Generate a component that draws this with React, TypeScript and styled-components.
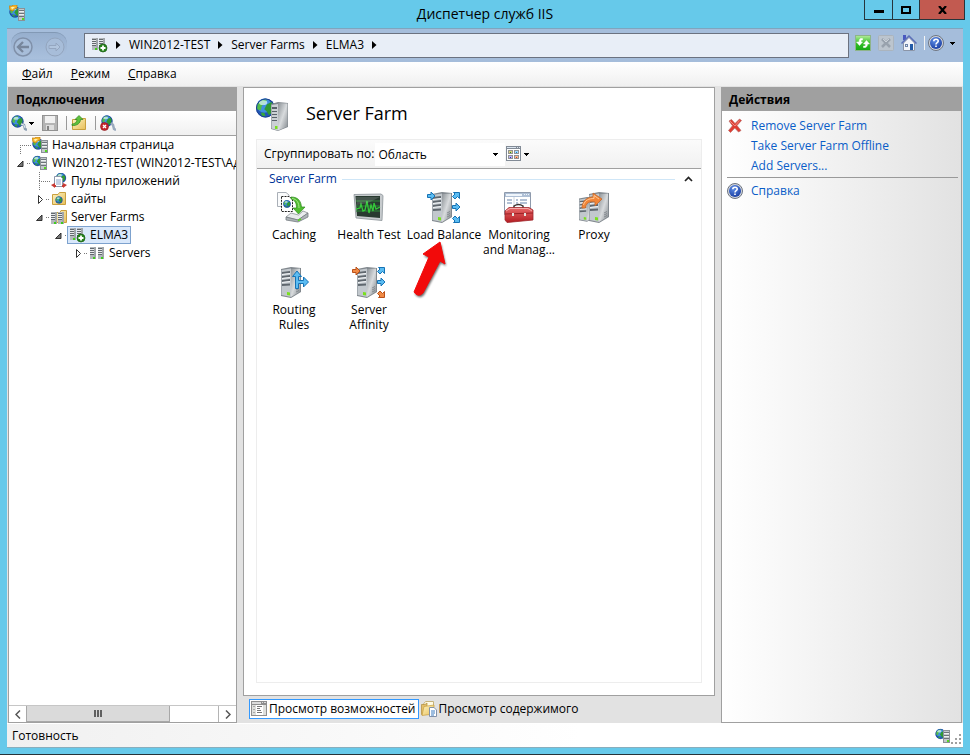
import React from "react";
import styled, { createGlobalStyle } from "styled-components";

/* ---------- global ---------- */

const GlobalStyle = createGlobalStyle`
  * { box-sizing: border-box; }
  body {
    margin: 0;
    font-family: "Open Sans", "Noto Sans", sans-serif;
    font-size: 12px;
    line-height: 18px;
    color: #000;
  }
  button, select { font: inherit; color: inherit; }
  button { border: 0; padding: 0; background: none; }
  svg { display: block; flex: none; }
  ul { list-style: none; margin: 0; padding: 0; }
`;

/* ---------- drawing parts ---------- */

type At = { x?: number; y?: number };

const Globe = ({ cx, cy, r }: { cx: number; cy: number; r: number }) => (
  <g transform={`translate(${cx} ${cy}) scale(${r / 8})`}>
    <circle r="8" fill="#2358b8" />
    <circle cx="-1" cy="-2" r="6" fill="#3f8fe0" />
    <path d="M-7 -3C-5 -6 -2 -8 1 -7L0 -4L-3 -2L-4 2L-7 1Z" fill="#52bd48" />
    <path d="M1 -3L5 -5L7 -2L6 3L3 6L1 3L-1 1Z" fill="#2f9a35" />
    <path d="M-4 4L-1 4L0 7L-3 6.500Z" fill="#35a83a" />
    <ellipse cx="-2" cy="-4.500" rx="3.500" ry="2" fill="#d8f1ff" opacity=".75" />
    <circle r="7.600" fill="none" stroke="#1b3f8c" strokeWidth=".8" />
  </g>
);

const MiniTower = ({ x = 0, y = 0 }: At) => (
  <g transform={`translate(${x} ${y})`} shapeRendering="crispEdges">
    <path d="M0 0H7V13H0Z" fill="#8b9196" />
    <path d="M1 1H6V12H1Z" fill="#c3c8cc" />
    <path d="M1 2H6V3H1ZM1 5H6V6H1ZM1 8H6V9H1Z" fill="#6d747a" />
    <path d="M1 3H6V4H1ZM1 6H6V7H1Z" fill="#eef0f1" />
    <path d="M4 10H6V12H4Z" fill="#52d81e" />
  </g>
);

const SlimTower = ({ x = 0, y = 0 }: At) => (
  <g transform={`translate(${x} ${y})`} shapeRendering="crispEdges">
    <path d="M0 0H6V12H0Z" fill="#b4b9bd" />
    <path d="M4 0H6V12H4Z" fill="#a1a6aa" />
    <path d="M0 1H4V2H0ZM0 3H4V4H0ZM0 5H4V6H0ZM0 7H4V8H0Z" fill="#63696e" />
    <path d="M0 2H4V3H0ZM0 4H4V5H0ZM0 6H4V7H0Z" fill="#e8eaec" />
    <path d="M3 10H5V12H3Z" fill="#3fce1c" />
  </g>
);

const Tower = ({ x = 0, y = 0 }: At) => (
  <g transform={`translate(${x} ${y})`}>
    <path d="M0 2L10 0L20 1V25L10 31L0 29Z" fill="#81888e" />
    <path d="M10 2L19 1.500V24.500L10 30Z" fill="url(#towerSide)" />
    <path d="M0.500 3L10 1.500V30L0.500 28Z" fill="#c2c8cd" />
    <path d="M1 5L9 4V6L1 7ZM1 9L9 8V10L1 11ZM1 13L9 12V14L1 15ZM1 17L9 16.500V18.500L1 19Z" fill="#5f676e" />
    <path d="M1 7L9 6V7L1 8ZM1 11L9 10V11L1 12ZM1 15L9 14V15L1 16Z" fill="#f2f5f7" />
    <path d="M6 25L9 25.500V28.500L6 28Z" fill="#79e01d" />
    <path d="M15 21L18 19.500M15 23L18 21.500M15 25L18 23.500" stroke="#6f767b" strokeWidth=".7" />
  </g>
);

const Defs = () => (
  <svg width="0" height="0" aria-hidden="true">
    <defs>
      <linearGradient id="towerSide" x1="0" y1="0" x2="1" y2="1">
        <stop offset="0" stopColor="#8c9297" />
        <stop offset=".5" stopColor="#d8dbdd" />
        <stop offset="1" stopColor="#83898e" />
      </linearGradient>
      <linearGradient id="folderFace" x1="0" y1="0" x2="1" y2="1">
        <stop offset="0" stopColor="#fdf3c0" />
        <stop offset="1" stopColor="#e8bf5a" />
      </linearGradient>
      <linearGradient id="greenTile" x1="0" y1="0" x2="0" y2="1">
        <stop offset="0" stopColor="#b5ec9e" />
        <stop offset=".5" stopColor="#36c129" />
        <stop offset="1" stopColor="#14a812" />
      </linearGradient>
      <linearGradient id="redBox" x1="0" y1="0" x2="0" y2="1">
        <stop offset="0" stopColor="#ea6a6a" />
        <stop offset="1" stopColor="#b41c22" />
      </linearGradient>
      <radialGradient id="helpBlue" cx=".4" cy=".3" r=".8">
        <stop offset="0" stopColor="#5f8fe8" />
        <stop offset="1" stopColor="#14379c" />
      </radialGradient>
      <filter id="soft" x="-20%" y="-20%" width="140%" height="140%">
        <feGaussianBlur stdDeviation="1.200" />
      </filter>
    </defs>
  </svg>
);

const Arrow = ({ x, y, warm = false }: { x: number; y: number; warm?: boolean }) => (
  <path
    transform={`translate(${x} ${y})`}
    d="M-3.500 -1.500H0V-4L4 0L0 4V1.500H-3.500Z"
    fill={warm ? "#f08a45" : "#5bbcf2"}
    stroke={warm ? "#b9501a" : "#1673b5"}
  />
);

const CornerArrow = ({ x, y, down = false, warm = false }: { x: number; y: number; down?: boolean; warm?: boolean }) => (
  <path
    transform={`translate(${x} ${y}) scale(1 ${down ? -1 : 1})`}
    d="M-2.500 -3.500H3.500V2.500L1.500 .5L-1 3L-3.500 .5L-1 -2Z"
    fill={warm ? "#f08a45" : "#5bbcf2"}
    stroke={warm ? "#b9501a" : "#1673b5"}
  />
);

const Icon = ({ size = 16, children }: { size?: number; children: React.ReactNode }) => (
  <svg width={size} height={size} viewBox={`0 0 ${size} ${size}`} aria-hidden="true">
    {children}
  </svg>
);

const StartIcon = () => (
  <Icon>
    <Globe cx={6} cy={7} r={5.5} />
    <path d="M0 1H3L4 0H8V3.500H6L4 6L1 5Z" fill="#f3b52c" stroke="#bf7d13" strokeWidth=".7" />
    <path d="M2 2L6 2L3 4.500Z" fill="#fff0ab" />
    <MiniTower x={9} y={3} />
  </Icon>
);

const HostIcon = () => (
  <Icon>
    <Globe cx={5.500} cy={6} r={5} />
    <MiniTower x={8} y={2} />
  </Icon>
);

const PlusBadge = () => (
  <g>
    <circle cx="11" cy="11" r="4" fill="#26851c" stroke="#1a5d14" strokeWidth=".7" />
    <path d="M11 8.500V13.500M8.500 11H13.500" stroke="#fff" strokeWidth="1.800" />
  </g>
);

const FarmIcon = () => (
  <Icon>
    <SlimTower x={0} y={1} />
    <SlimTower x={7} y={1} />
    <PlusBadge />
  </Icon>
);

const ServersIcon = () => (
  <Icon>
    <SlimTower x={1} y={2} />
    <SlimTower x={9} y={2} />
  </Icon>
);

const Folder = () => (
  <path d="M1.500 3.500H7L8.500 1.500H14.500V13.500H1.500Z" fill="url(#folderFace)" stroke="#c9a03f" />
);

const FarmsFolderIcon = () => (
  <Icon>
    <path d="M5.500 3.500H9L10 1.500H15.500V13.500H5.500Z" fill="url(#folderFace)" stroke="#c9a03f" />
    <SlimTower x={0} y={3} />
    <SlimTower x={7} y={3} />
  </Icon>
);

const SitesIcon = () => (
  <Icon>
    <Folder />
    <Globe cx={8} cy={9} r={3.500} />
  </Icon>
);

const PoolsIcon = () => (
  <Icon>
    <Globe cx={10} cy={5} r={5} />
    <path d="M3.500 3.500H9.500L11.500 5.500V13.500H3.500Z" fill="#fff" stroke="#8a97ab" />
    <path d="M5 7H10M5 9H10M5 11H10" stroke="#8ba4c8" />
    <path d="M0 12L4 10V15ZM16 12L12 10V15Z" fill="#c83a34" />
    <path d="M3 13H5M11 13H13" stroke="#c83a34" strokeWidth="2" />
  </Icon>
);

const ConnectIcon = () => (
  <Icon>
    <Globe cx={6.500} cy={6.500} r={6} />
    <path d="M10 9L13 10L14 14L16 15" fill="none" stroke="#8c9eb2" strokeWidth="2.500" />
    <path d="M10 9L13 10L14 13" fill="none" stroke="#dce6f0" />
  </Icon>
);

const DisconnectIcon = () => (
  <Icon>
    <Globe cx={7} cy={6} r={5.500} />
    <path d="M11 8L13 10L14 14L16 15" fill="none" stroke="#9aaabd" strokeWidth="2.500" />
    <circle cx="4.500" cy="11.500" r="4" fill="#c6262c" stroke="#86171b" strokeWidth=".6" />
    <path d="M3 10L6 13M6 10L3 13" stroke="#fff" strokeWidth="1.300" />
  </Icon>
);

const SaveIcon = () => (
  <Icon>
    <g shapeRendering="crispEdges">
      <path d="M0 0H16V16H0Z" fill="#929292" />
      <path d="M1 1H15V15H1Z" fill="#b4b4b4" />
      <path d="M3 1H13V8H3Z" fill="#f1f1f1" />
      <path d="M4 10H12V15H4Z" fill="#dedede" />
      <path d="M5 11H7V15H5Z" fill="#828282" />
    </g>
  </Icon>
);

const UpFolderIcon = () => (
  <Icon>
    <path d="M1.500 4.500H8L9.500 3.500H14.500V14.500H1.500Z" fill="url(#folderFace)" stroke="#c9a03f" />
    <path d="M1 9C4 9 6 7 6 4.500H4L8 .5L12 4.500H9.500C9.500 8 6 11 1 10.500Z" fill="#5ec23c" stroke="#328320" strokeWidth=".7" />
  </Icon>
);

const HelpIcon = () => (
  <Icon>
    <circle cx="8" cy="8" r="7.500" fill="#d3d7de" stroke="#6d7480" />
    <circle cx="8" cy="8" r="6" fill="url(#helpBlue)" />
    <path d="M5.800 6.300C5.800 3.600 10.300 3.600 10.200 6.200C10.100 7.700 8 7.600 8 9.500" fill="none" stroke="#fff" strokeWidth="1.600" />
    <path d="M7.200 10.500H8.800V12H7.200Z" fill="#fff" />
  </Icon>
);

const RefreshIcon = () => (
  <Icon>
    <rect x=".5" y=".5" width="15" height="15" fill="url(#greenTile)" stroke="#8eb48a" />
    <path d="M7.500 3.500H5.500Q4 4 4 7H1.500L4.500 10.500L7.500 7H6V5H7.500ZM8.500 12.500H10.500Q12.500 12 12.500 9H14.500L11.500 5.500L8.500 9H10.500V11H8.500Z" fill="#fff" stroke="#fff" strokeWidth=".5" />
  </Icon>
);

const StopIcon = () => (
  <Icon>
    <rect x=".5" y=".5" width="15" height="15" rx="1" fill="#bcc5ce" stroke="#abb4bd" />
    <path d="M4 4L12 12M12 4L4 12" stroke="#98a2ad" strokeWidth="2.500" />
    <path d="M5 4L8 7L11 4" fill="none" stroke="#d7dde3" strokeWidth=".8" />
  </Icon>
);

const HomeIcon = () => (
  <Icon>
    <path d="M2 0H5V5H2Z" fill="#4858c0" />
    <path d="M2.500 8L8 2.500L13.500 8V15.500H2.500Z" fill="#f3f5fa" stroke="#8b95a7" />
    <path d="M.5 8.500L8 1L15.500 8.500" fill="none" stroke="#5c6fb8" strokeWidth="1.500" />
    <path d="M9 9H12V15H9Z" fill="#235aa7" />
    <path d="M4 9H7V12H4Z" fill="#6d84a8" />
    <path d="M5 10H6V11H5Z" fill="#e8edf5" />
  </Icon>
);

const DeleteIcon = () => (
  <Icon>
    <path d="M2 3L4.500 1.500L8 5.500L12.500 1L14.500 2.500L10 7.500L14 12.500L11.500 14L7.800 10L3.500 14.500L1.500 12.500L5.500 7.800Z" fill="#df3d33" stroke="#b86a66" strokeWidth=".7" />
    <path d="M3 3L8 8L12.500 2.500" fill="none" stroke="#f79a8f" strokeWidth=".8" />
  </Icon>
);

const ViewIcon = () => (
  <Icon>
    <g shapeRendering="crispEdges">
      <path d="M0 0H15V15H0Z" fill="#828b96" />
      <path d="M1 3H14V14H1Z" fill="#fff" />
      <path d="M1 1H10V2H1ZM11 1H12V2H11ZM13 1H14V2H13Z" fill="#dbe5f0" />
      <path d="M2 4H7V8H2ZM8 4H13V8H8ZM2 9H7V13H2ZM8 9H13V13H8Z" fill="#929292" />
      <path d="M3 5H6V7H3Z" fill="#d8d07a" /><path d="M9 5H12V7H9Z" fill="#9fdcff" />
      <path d="M3 10H6V12H3Z" fill="#b9b4f5" /><path d="M9 10H12V12H9Z" fill="#f8b795" />
      <path d="M4 6H5V7H4Z" fill="#298a28" /><path d="M10 6H11V7H10Z" fill="#1684d0" />
      <path d="M4 11H5V12H4Z" fill="#3929c8" /><path d="M10 11H11V12H10Z" fill="#d14c18" />
    </g>
  </Icon>
);

const FeaturesIcon = () => (
  <Icon>
    <g shapeRendering="crispEdges">
      <path d="M0 0H16V15H0Z" fill="#8e8e8e" />
      <path d="M1 4H15V14H1Z" fill="#fff" />
      <path d="M1 1H10V3H1ZM11 1H12V2H11ZM13 1H15V2H13Z" fill="#dcdcdc" />
      <path d="M1 4H5V14H1ZM12 4H15V14H12Z" fill="#dedfdc" />
      <path d="M6 5H11V6H6ZM6 7H9V8H6ZM6 9H10V10H6ZM6 11H11V12H6Z" fill="#777" />
      <path d="M2 5H4V6H2ZM2 8H4V9H2ZM2 11H4V12H2Z" fill="#aaa" />
    </g>
  </Icon>
);

const ContentIcon = () => (
  <Icon>
    <path d="M4.500 .5H12.500V11.500H2.500V3Z" fill="#fffbe6" stroke="#c6b27b" />
    <path d="M.5 3.500H4L6 2V13.500H.5Z" fill="#e4c06a" stroke="#b08c39" strokeWidth=".7" />
    <path d="M3 5.500L13 4V13L1 14.500Z" fill="url(#folderFace)" stroke="#c59d40" strokeWidth=".7" />
    <path d="M8.500 6.500H13L15.500 9V15.500H8.500Z" fill="#fff" stroke="#8292aa" />
    <path d="M10 10H14M10 12H14M10 14H13" stroke="#3c7cc0" />
  </Icon>
);

const CaretRight = () => (
  <svg width="5" height="8" viewBox="0 0 5 8" aria-hidden="true"><path d="M0 0L4.500 4L0 8Z" fill="#000" /></svg>
);

const CaretDown = () => (
  <svg width="5" height="3" viewBox="0 0 5 3" aria-hidden="true" shapeRendering="crispEdges">
    <path d="M0 0H5V1H4V2H3V3H2V2H1V1H0Z" fill="#000" />
  </svg>
);

const SiteHeadIcon = () => (
  <svg width="34" height="34" viewBox="0 0 34 34" aria-hidden="true">
    <Globe cx={9.500} cy={10} r={9.500} />
    <g transform="translate(14 3)">
      <path d="M1 3L8 1L18 2V26L8 30L1 28Z" fill="#81888e" />
      <path d="M8 2L17.500 2.500V25.500L8 29.500Z" fill="url(#towerSide)" />
      <path d="M1.500 4L8 3V29.500L1.500 27.500Z" fill="#cbd0d4" />
      <path d="M2 6H7V8H2ZM2 10H7V11H2ZM2 13H7V14H2ZM2 16H7V17H2ZM2 19H7V20H2Z" fill="#59626a" />
      <path d="M5 25H7.500V28H5Z" fill="#79e01d" />
    </g>
  </svg>
);

const CachingIcon = () => (
  <Icon size={34}>
    <path d="M.5 1.500H9L12 4V15.500H.5Z" fill="#fafbfc" stroke="#a9afb7" />
    <path d="M4.500 5.500H12L15.500 8V20.500H4.500Z" fill="#fff" stroke="#222" strokeDasharray="2 1" />
    <Globe cx={10} cy={13} r={3.700} />
    <path d="M14 6C22 6 24 11 24.500 16H28L21.500 23L16 17H19.500C19.500 12 18 9 14 8Z" fill="#51bd31" stroke="#2f8a20" strokeWidth=".7" />
    <path d="M15 7.500C20 8 22 12 22 17" fill="none" stroke="#a5e889" />
    <path d="M9 26L14 22L21.500 24L26 20L31 22L21 29Z" fill="#e9ebed" stroke="#8c9297" strokeWidth=".8" />
    <path d="M9 26L21 29L31 22V26L21 31L9 29Z" fill="#aeb4b8" stroke="#747b80" strokeWidth=".8" />
    <path d="M21 29.500L24 28" stroke="#55dc1e" strokeWidth="1.500" />
  </Icon>
);

const HealthIcon = () => (
  <Icon size={34}>
    <path d="M2 3.500L29 3L31 4.500L30 29.500L4 27Z" fill="#c7cbce" stroke="#8d9499" strokeWidth=".8" />
    <path d="M3.500 5H28V27L5 25Z" fill="#283a30" />
    <path d="M4 10H28M4 15H28M4 20H28" stroke="#2c8a38" />
    <path d="M4 18L8 17L9 13L11 20L13 19L15 10L17 22L19 14L21 20L22 12L24 18L28 16" fill="none" stroke="#35c83a" strokeWidth="1.300" />
    <path d="M4 6H28L16 12L5 14Z" fill="#fff" opacity=".14" />
  </Icon>
);

const BalanceIcon = ({ warm = false }: { warm?: boolean }) => (
  <Icon size={34}>
    <Tower x={5} y={1} />
    <Arrow x={4} y={5} warm={warm} />
    <CornerArrow x={29} y={5} />
    <Arrow x={29} y={16} />
    <CornerArrow x={29} y={28} down warm={warm} />
  </Icon>
);

const MonitoringIcon = () => (
  <Icon size={34}>
    <path d="M2.500 1.500H28.500V23.500H2.500Z" fill="#fff" stroke="#8e9aac" />
    <path d="M3 2H28V6H3Z" fill="#aebfd5" />
    <path d="M4 3H20V5H4ZM22 3H23V4H22ZM24 3H25V4H24ZM26 3H27V4H26Z" fill="#eff5fb" />
    <path d="M5 9H10M5 12H10M14 9H16M18 9H25M14 12H16M18 12H25" stroke="#6683aa" />
    <path d="M12 6V23" stroke="#ced6e0" />
    <path d="M12 18V15Q16.500 12 21 15V18" fill="none" stroke="#3d3432" strokeWidth="1.500" />
    <path d="M3 20L7 16.500H27L31 19V29L5 31.500L3 29Z" fill="url(#redBox)" stroke="#a02a2d" strokeWidth=".8" />
    <path d="M3 23L31 22" stroke="#9c2226" />
    <path d="M4 20L8 17.500H26L30 20" fill="none" stroke="#f5aaaa" />
    <path d="M10 22H12V25H10ZM22 22H24V25H22Z" fill="#e3e3df" />
  </Icon>
);

const ProxyIcon = () => (
  <Icon size={34}>
    <g transform="translate(2 6) scale(.8)"><Tower /></g>
    <Tower x={12} y={1} />
    <path d="M5 17C5 10 10 6 16 6V2L25 8L18 15V11C12 10 9 12 8.500 17Z" fill="#f28537" stroke="#c4682c" strokeWidth=".8" />
    <path d="M6.500 14C8 9 12 7.500 17 7.500V4.500L22 8" fill="none" stroke="#ffc794" />
  </Icon>
);

const RoutingIcon = () => (
  <Icon size={34}>
    <Tower x={4} y={1} />
    <path d="M18.500 22.500V10.500H15.500L20 5L24.500 10.500H21.500V14.500H26.500V11L31.500 16L26.500 21V17.500H21.500V22.500Z" fill="#5bbcf2" stroke="#1673b5" />
  </Icon>
);

/* ---------- window frame ---------- */

const Window = styled.div`
  min-height: 100vh;
  display: flex;
  flex-direction: column;
  padding: 0 7px 6px;
  background: #66c9ea;
  border-bottom: 1px solid #263238;
`;

const TitleBar = styled.header`
  display: grid;
  grid-template-columns: 1fr auto 1fr;
  align-items: start;
  height: 28px;
`;

const TitleIcon = styled.div`
  padding: 5px 2px;
`;

const Title = styled.h1`
  margin: 0;
  font-size: 14px;
  line-height: 28px;
  font-weight: 400;
`;

const Caption = styled.div`
  justify-self: end;
  display: flex;
  border: 1px solid #26353c;
  border-top: 0;
  margin-right: -2px;
`;

const CaptionButton = styled.button<{ $close?: boolean }>`
  width: ${(p) => (p.$close ? 45 : 27)}px;
  height: 19px;
  display: flex;
  align-items: center;
  justify-content: center;
  background: ${(p) => (p.$close ? "#c25a50" : "transparent")};
  & + & { border-left: 1px solid #26353c; }
`;

const Client = styled.div`
  flex: 1;
  display: flex;
  flex-direction: column;
  border-top: 1px solid #7fa5be;
  border-bottom: 1px solid #88aebd;
  background: #e2e2e2;
`;

const AddressBar = styled.nav`
  height: 33px;
  display: flex;
  align-items: center;
  gap: 6px;
  padding: 0 8px 1px 4px;
  background: #a5bddb;
`;

const NavPair = styled.div`
  display: flex;
  gap: 10px;
  width: 56px;
  padding: 3px 1px 1px;
  margin-right: 11px;
  border-radius: 12px;
  border-top: 1px solid #8299b5;
  background: linear-gradient(#97afce, #a9c0dd);
`;

const PlainButton = styled.button<{ $gap?: number }>`
  display: flex;
  align-items: center;
  gap: ${(p) => p.$gap ?? 4}px;
`;

const Crumbs = styled.div`
  flex: 1;
  display: flex;
  align-items: center;
  gap: 8px;
  height: 25px;
  padding: 0 7px;
  border: 1px solid #6b7280;
  background: #e8eef7;
`;

const AddressTools = styled.div`
  display: flex;
  align-items: center;
  gap: 7px;
  padding-bottom: 4px;
`;

const Divider = styled.span<{ $light?: boolean }>`
  width: 1px;
  height: 14px;
  margin-right: -4px;
  background: ${(p) => (p.$light ? "#f3f3f3" : "#999")};
`;

const MenuBar = styled.nav`
  height: 24px;
  display: flex;
  align-items: center;
  gap: 18px;
  padding: 0 15px;
  background: linear-gradient(#fff, #f0f0f0);
`;

const Body = styled.main`
  flex: 1;
  display: flex;
  gap: 6px;
  padding: 1px 1px 0;
`;

/* ---------- left pane ---------- */

const SidePane = styled.section<{ $width: number }>`
  flex: 0 0 ${(p) => p.$width}px;
  min-width: 0;
  display: flex;
  flex-direction: column;
  border: 1px solid #a0a0a0;
  border-top: 0;
  background: #fff;
`;

const ActionsPane = styled(SidePane)`
  background: linear-gradient(90deg, #fff, #e2e2e2);
`;

const PaneTitle = styled.h2`
  margin: 0;
  height: 24px;
  padding: 0 7px;
  font-size: 12px;
  line-height: 25px;
  font-weight: 700;
  background: #a0a0a0;
`;

const PaneTools = styled.div`
  display: flex;
  align-items: center;
  gap: 8px;
  height: 25px;
  padding: 0 2px;
  border-bottom: 1px solid #a0a0a0;
  background: linear-gradient(#fff, #f0f0f0);
`;

const Tree = styled.ul`
  flex: 1;
  overflow: hidden;
`;

const TreeRow = styled.li<{ $depth: number }>`
  display: flex;
  align-items: center;
  height: 18px;
  padding-left: ${(p) => p.$depth * 19}px;
  white-space: nowrap;
`;

const TreeLabel = styled.button<{ $selected?: boolean }>`
  display: flex;
  align-items: center;
  gap: 4px;
  height: 18px;
  padding: 0 2px;
  margin-left: -2px;
  border: 1px solid ${(p) => (p.$selected ? "#7da2ce" : "transparent")};
  background: ${(p) => (p.$selected ? "#d9e8fb" : "transparent")};
`;

const ScrollBar = styled.div`
  display: flex;
  height: 17px;
  border-top: 1px solid #c6c6c6;
`;

const ScrollButton = styled.button`
  width: 17px;
  display: flex;
  align-items: center;
  justify-content: center;
  background: #fff;
`;

const ScrollThumb = styled.div`
  flex: 0 0 144px;
  display: flex;
  align-items: center;
  justify-content: center;
  border: 1px solid #a8a8a8;
  border-top: 0;
  background: #dadada;
`;

const ScrollTrack = styled.div`
  flex: 1;
  border-right: 1px solid #b4b4b4;
`;

type Branch = "leaf" | "open" | "closed";

const Joint = ({ branch, first }: { branch: Branch; first?: boolean }) => (
  <svg width="22" height="18" viewBox="0 0 22 18" aria-hidden="true">
    <g fill="none" stroke="#777" strokeDasharray="1 1" shapeRendering="crispEdges">
      {branch === "leaf" ? <path d="M11.500 9V18M11 9.500H22" /> : <path d="M18 9.500H22" />}
      {branch === "leaf" && !first && <path d="M11.500 0V9" />}
    </g>
    {branch === "open" && <path d="M14 7V12.500H8.500Z" fill="#777" stroke="#222" strokeWidth=".9" />}
    {branch === "closed" && <path d="M10.500 5.500L14.500 9.500L10.500 13.500Z" fill="#fff" stroke="#333" />}
  </svg>
);

const treeItems: { depth: number; branch: Branch; icon: React.ReactNode; label: string; selected?: boolean }[] = [
  { depth: 0, branch: "leaf", icon: <StartIcon />, label: "Начальная страница" },
  { depth: 0, branch: "open", icon: <HostIcon />, label: "WIN2012-TEST (WIN2012-TEST\\Администратор)" },
  { depth: 1, branch: "leaf", icon: <PoolsIcon />, label: "Пулы приложений" },
  { depth: 1, branch: "closed", icon: <SitesIcon />, label: "сайты" },
  { depth: 1, branch: "open", icon: <FarmsFolderIcon />, label: "Server Farms" },
  { depth: 2, branch: "open", icon: <FarmIcon />, label: "ELMA3", selected: true },
  { depth: 3, branch: "closed", icon: <ServersIcon />, label: "Servers" },
];

/* ---------- centre ---------- */

const Centre = styled.section`
  flex: 1;
  min-width: 0;
  display: flex;
  flex-direction: column;
`;

const Page = styled.div`
  flex: 1;
  display: flex;
  flex-direction: column;
  padding: 0 12px 12px 12px;
  border: 1px solid #a0a0a0;
  background: #fff;
`;

const PageHead = styled.div`
  display: flex;
  align-items: center;
  gap: 16px;
  height: 51px;
  padding-top: 3px;
`;

const PageTitle = styled.h2`
  margin: 0;
  padding-bottom: 4px;
  font-size: 18px;
  line-height: 24px;
  font-weight: 400;
`;

const Features = styled.div`
  flex: 1;
  border: 1px solid #ededed;
`;

const GroupBar = styled.div`
  display: flex;
  align-items: center;
  gap: 1px;
  height: 29px;
  padding-left: 7px;
  border-bottom: 1px solid #a0a0a0;
  background: linear-gradient(#fbfbfb, #f1f1f1);
`;

const SelectBox = styled.div`
  display: grid;
  align-items: center;
  width: 130px;
  background: #fff;
  > * { grid-area: 1 / 1; }
  > svg { justify-self: end; margin-right: 7px; pointer-events: none; }
`;

const Select = styled.select`
  appearance: none;
  width: 100%;
  height: 23px;
  padding: 1px 3px 0;
  border: 0;
  background: #fff;
`;

const GroupHead = styled.div`
  display: flex;
  align-items: center;
  gap: 5px;
  height: 20px;
  padding: 0 8px 0 12px;
`;

const GroupName = styled.h3`
  margin: 0;
  font-size: 12px;
  font-weight: 400;
  color: #003399;
`;

const GroupLine = styled.span`
  flex: 1;
  height: 1px;
  margin-right: 4px;
  background: #cfe6f7;
`;

const Grid = styled.div`
  display: grid;
  grid-template-columns: repeat(auto-fill, 75px);
  grid-auto-rows: 75px;
`;

const Tile = styled.button`
  position: relative;
  display: flex;
  flex-direction: column;
  align-items: center;
  gap: 2px;
  padding: 2px 1px 0 0;
  line-height: 15px;
  text-align: center;
`;

const TileText = styled.span`
  white-space: pre;
`;

const Pointer = styled.svg`
  position: absolute;
  left: 2px;
  top: 51px;
  pointer-events: none;
`;

const tiles: { icon: React.ReactNode; label: string; pointed?: boolean }[] = [
  { icon: <CachingIcon />, label: "Caching" },
  { icon: <HealthIcon />, label: "Health Test" },
  { icon: <BalanceIcon />, label: "Load Balance", pointed: true },
  { icon: <MonitoringIcon />, label: "Monitoring\nand Manag..." },
  { icon: <ProxyIcon />, label: "Proxy" },
  { icon: <RoutingIcon />, label: "Routing\nRules" },
  { icon: <BalanceIcon warm />, label: "Server\nAffinity" },
];

const ViewTabs = styled.div`
  display: flex;
  align-items: center;
  height: 27px;
  padding: 0 0 2px 6px;
`;

const ViewTab = styled.button<{ $active?: boolean }>`
  display: flex;
  align-items: center;
  gap: 2px;
  height: 20px;
  padding: 0 2px 0 1px;
  border: 1px solid ${(p) => (p.$active ? "#3399ff" : "transparent")};
  background: ${(p) => (p.$active ? "#fff" : "transparent")};
`;

/* ---------- right pane ---------- */

const ActionList = styled.ul`
  margin: 5px 3px 0 5px;
  padding-bottom: 1px;
  & + & { margin-top: 0; padding-top: 3px; border-top: 1px solid #999; }
`;

const Action = styled.li`
  display: grid;
  grid-template-columns: 16px 1fr;
  align-items: center;
  gap: 8px;
  height: 20px;
`;

const ActionLink = styled.a`
  grid-column: 2;
  color: #0a5dc8;
  text-decoration: none;
`;

const StatusBar = styled.footer`
  display: flex;
  align-items: center;
  justify-content: space-between;
  height: 24px;
  padding: 0 2px 0 5px;
  border-top: 1px solid #fff;
  background: linear-gradient(90deg, #f0f0f0, #fff 60%);
`;

const StatusIcons = styled.div`
  display: flex;
  align-items: flex-end;
`;

export default function App() {
  return (
    <Window>
      <GlobalStyle />
      <TitleBar>
        <TitleIcon><StartIcon /><Defs /></TitleIcon>
        <Title>Диспетчер служб IIS</Title>
        <Caption>
          <CaptionButton aria-label="Свернуть">
            <svg width="10" height="10" viewBox="0 0 10 10"><path d="M0 5H10V8H0Z" /></svg>
          </CaptionButton>
          <CaptionButton aria-label="Развернуть">
            <svg width="10" height="8" viewBox="0 0 10 8"><path d="M1 1H9V7H1Z" fill="none" stroke="#000" strokeWidth="2" /></svg>
          </CaptionButton>
          <CaptionButton $close aria-label="Закрыть">
            <svg width="9" height="8" viewBox="0 0 9 8"><path d="M1 0L8 8M8 0L1 8" stroke="#000" strokeWidth="2.200" /></svg>
          </CaptionButton>
        </Caption>
      </TitleBar>

      <Client>
        <AddressBar aria-label="Адрес">
          <NavPair>
            <PlainButton aria-label="Назад">
              <svg width="22" height="22" viewBox="0 0 22 22">
                <circle cx="11" cy="11" r="9" fill="#a7bdd9" stroke="#8091aa" strokeWidth="1.500" />
                <path d="M17 11H7M11 6L6 11L11 16" fill="none" stroke="#77869c" strokeWidth="2.300" />
              </svg>
            </PlainButton>
            <PlainButton aria-label="Вперед">
              <svg width="22" height="22" viewBox="0 0 22 22">
                <circle cx="11" cy="11" r="9" fill="#a7bdd9" stroke="#93a5be" />
                <path d="M5 9.500H12V7L16 11L12 15V12.500H5Z" fill="#b1c5de" stroke="#94a6c0" />
              </svg>
            </PlainButton>
          </NavPair>
          <Crumbs>
            <FarmIcon />
            <CaretRight />
            <PlainButton>WIN2012-TEST</PlainButton>
            <CaretRight />
            <PlainButton>Server Farms</PlainButton>
            <CaretRight />
            <PlainButton>ELMA3</PlainButton>
            <CaretRight />
          </Crumbs>
          <AddressTools>
            <PlainButton aria-label="Обновить"><RefreshIcon /></PlainButton>
            <PlainButton aria-label="Остановить"><StopIcon /></PlainButton>
            <PlainButton aria-label="Домой"><HomeIcon /></PlainButton>
            <Divider $light />
            <PlainButton $gap={6} aria-label="Справка"><HelpIcon /><CaretDown /></PlainButton>
          </AddressTools>
        </AddressBar>

        <MenuBar aria-label="Меню">
          <PlainButton><span><u>Ф</u>айл</span></PlainButton>
          <PlainButton><span><u>Р</u>ежим</span></PlainButton>
          <PlainButton><span><u>С</u>правка</span></PlainButton>
        </MenuBar>

        <Body>
          <SidePane $width={229}>
            <PaneTitle>Подключения</PaneTitle>
            <PaneTools>
              <PlainButton $gap={2} aria-label="Подключить"><ConnectIcon /><CaretDown /></PlainButton>
              <PlainButton aria-label="Сохранить"><SaveIcon /></PlainButton>
              <Divider />
              <PlainButton aria-label="Вверх"><UpFolderIcon /></PlainButton>
              <Divider />
              <PlainButton aria-label="Отключить"><DisconnectIcon /></PlainButton>
            </PaneTools>
            <Tree>
              {treeItems.map((item, i) => (
                <TreeRow key={item.label} $depth={item.depth}>
                  <Joint branch={item.branch} first={i === 0} />
                  <TreeLabel $selected={item.selected}>
                    {item.icon}
                    {item.label}
                  </TreeLabel>
                </TreeRow>
              ))}
            </Tree>
            <ScrollBar>
              <ScrollButton aria-label="Влево">
                <svg width="6" height="9" viewBox="0 0 6 9"><path d="M5 .5L1 4.500L5 8.500" fill="none" stroke="#555" strokeWidth="1.500" /></svg>
              </ScrollButton>
              <ScrollThumb>
                <svg width="8" height="7" viewBox="0 0 8 7"><path d="M0 0H2V7H0ZM3 0H5V7H3ZM6 0H8V7H6Z" fill="#606060" /></svg>
              </ScrollThumb>
              <ScrollTrack />
              <ScrollButton aria-label="Вправо">
                <svg width="6" height="9" viewBox="0 0 6 9"><path d="M1 .5L5 4.500L1 8.500" fill="none" stroke="#555" strokeWidth="1.500" /></svg>
              </ScrollButton>
            </ScrollBar>
          </SidePane>

          <Centre>
            <Page>
              <PageHead>
                <SiteHeadIcon />
                <PageTitle>Server Farm</PageTitle>
              </PageHead>
              <Features>
                <GroupBar>
                  <label htmlFor="grouping">Сгруппировать по:</label>
                  <SelectBox>
                    <Select id="grouping" defaultValue="area"><option value="area">Область</option></Select>
                    <CaretDown />
                  </SelectBox>
                  <PlainButton $gap={2} aria-label="Вид"><ViewIcon /><CaretDown /></PlainButton>
                </GroupBar>
                <GroupHead>
                  <GroupName>Server Farm</GroupName>
                  <GroupLine />
                  <PlainButton aria-label="Свернуть группу">
                    <svg width="9" height="6" viewBox="0 0 9 6"><path d="M1 5L4.500 1.500L8 5" fill="none" stroke="#222" strokeWidth="1.700" /></svg>
                  </PlainButton>
                </GroupHead>
                <Grid>
                  {tiles.map((tile) => (
                    <Tile key={tile.label}>
                      {tile.icon}
                      <TileText>{tile.label}</TileText>
                      {tile.pointed && (
                        <Pointer width="46" height="64" viewBox="0 0 46 64" aria-hidden="true">
                          <path d="M31 2L36 24L31 21L14 53Q9 58 5 52L20 17L14 14Z" fill="#000" opacity=".6" filter="url(#soft)" transform="translate(1 2)" />
                          <path d="M31 2L36 24L31 21L14 53Q9 58 5 52L20 17L14 14Z" fill="#f20a0a" stroke="#f20a0a" strokeLinejoin="round" />
                        </Pointer>
                      )}
                    </Tile>
                  ))}
                </Grid>
              </Features>
            </Page>
            <ViewTabs>
              <ViewTab $active><FeaturesIcon />Просмотр возможностей</ViewTab>
              <ViewTab><ContentIcon />Просмотр содержимого</ViewTab>
            </ViewTabs>
          </Centre>

          <ActionsPane $width={241}>
            <PaneTitle>Действия</PaneTitle>
            <ActionList>
              <Action><DeleteIcon /><ActionLink href="#remove">Remove Server Farm</ActionLink></Action>
              <Action><ActionLink href="#offline">Take Server Farm Offline</ActionLink></Action>
              <Action><ActionLink href="#add">Add Servers...</ActionLink></Action>
            </ActionList>
            <ActionList>
              <Action><HelpIcon /><ActionLink href="#help">Справка</ActionLink></Action>
            </ActionList>
          </ActionsPane>
        </Body>

        <StatusBar>
          <span>Готовность</span>
          <StatusIcons>
            <HostIcon />
            <svg width="10" height="10" viewBox="0 0 10 10" aria-hidden="true">
              <path d="M0 8H2V10H0ZM4 8H6V10H4ZM8 8H10V10H8ZM4 4H6V6H4ZM8 4H10V6H8ZM8 0H10V2H8Z" fill="#a0a0a0" />
            </svg>
          </StatusIcons>
        </StatusBar>
      </Client>
    </Window>
  );
}
